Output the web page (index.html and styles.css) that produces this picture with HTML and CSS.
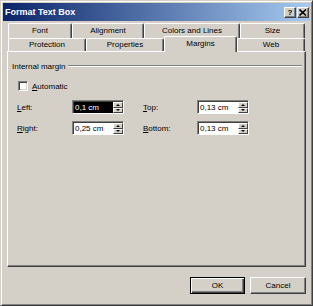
FILE: index.html
```html
<!DOCTYPE html>
<html lang="en">
<head>
    <meta charset="UTF-8">
    <meta name="viewport" content="width=device-width, initial-scale=1.0">
    <title>Format Text Box</title>
    <link rel="stylesheet" href="styles.css">
</head>
<body>
    <div class="window">
        <div class="titlebar">
            <span class="title">Format Text Box</span>
            <div class="title-buttons">
                <span class="tbtn help">?</span>
                <span class="tbtn close">
                    <svg width="8" height="7" viewBox="0 0 8 7"><path d="M0.5 0.5 L7 6.5 M7 0.5 L0.5 6.5" stroke="#000" stroke-width="1.6"/></svg>
                </span>
            </div>
        </div>

        <div class="tabs">
            <div class="tab-row back">
                <div class="tab t-font">Font</div>
                <div class="tab t-align">Alignment</div>
                <div class="tab t-colors">Colors and Lines</div>
                <div class="tab t-size">Size</div>
            </div>
            <div class="tab-row front">
                <div class="tab t-prot">Protection</div>
                <div class="tab t-props">Properties</div>
                <div class="tab t-margins selected">Margins</div>
                <div class="tab t-web">Web</div>
            </div>
        </div>

        <div class="panel">
            <div class="group-title">
                <span>Internal margin</span>
                <span class="rule"></span>
            </div>
            <div class="check">
                <span class="box"></span>
                <span><u>A</u>utomatic</span>
            </div>
            <div class="fields">
                <label><u>L</u>eft:</label>
                <div class="spin">
                    <span class="value selected-text">0,1 cm</span>
                    <span class="arrows"><span class="up"></span><span class="down"></span></span>
                </div>
                <label><u>T</u>op:</label>
                <div class="spin">
                    <span class="value">0,13 cm</span>
                    <span class="arrows"><span class="up"></span><span class="down"></span></span>
                </div>

                <label><u>R</u>ight:</label>
                <div class="spin">
                    <span class="value">0,25 cm</span>
                    <span class="arrows"><span class="up"></span><span class="down"></span></span>
                </div>
                <label><u>B</u>ottom:</label>
                <div class="spin">
                    <span class="value">0,13 cm</span>
                    <span class="arrows"><span class="up"></span><span class="down"></span></span>
                </div>
            </div>
        </div>

        <div class="buttons">
            <button class="btn default">OK</button>
            <button class="btn">Cancel</button>
        </div>
    </div>
</body>
</html>
```

FILE: styles.css
```css
body {
    margin: 0;
    background-color: #d4d0c8;
    font-family: "Liberation Sans", Arial, sans-serif;
    font-size: 8px;
    color: #000;
}

.window {
    width: 313px;
    height: 306px;
    box-sizing: border-box;
    border: 1px solid;
    border-color: #d4d0c8 #404040 #404040 #d4d0c8;
    box-shadow: inset 1px 1px #fff, inset -1px -1px #808080;
    padding: 2px;
    display: flex;
    flex-direction: column;
}

/* title bar */
.titlebar {
    height: 18px;
    background: linear-gradient(to right, #0a246a, #a6caf0);
    color: #fff;
    display: flex;
    align-items: center;
    justify-content: space-between;
    padding-left: 2px;
}

.title {
    font-size: 9px;
    font-weight: bold;
}

.title-buttons {
    display: flex;
    gap: 1px;
    margin-right: 1px;
}

.tbtn {
    width: 12px;
    height: 11px;
    box-sizing: border-box;
    background-color: #d4d0c8;
    border: 1px solid;
    border-color: #fff #404040 #404040 #fff;
    box-shadow: inset -1px -1px #808080;
    display: flex;
    align-items: center;
    justify-content: center;
    color: #000;
    font-weight: bold;
    font-size: 8px;
}

/* tabs */
.tabs {
    margin-top: 2px;
    padding-left: 5px;
}

.tab-row {
    display: flex;
}

.tab {
    box-sizing: border-box;
    background-color: #d4d0c8;
    border-top: 1px solid #fff;
    border-left: 1px solid #fff;
    border-right: 1px solid #404040;
    box-shadow: inset -1px 0 #808080;
    border-radius: 2px 2px 0 0;
    text-align: center;
}

.back .tab {
    height: 15px;
    line-height: 14px;
}

.front .tab {
    height: 13px;
    line-height: 12px;
}

.t-font { width: 64px; }
.t-align { width: 72px; }
.t-colors { width: 96px; }
.t-size { width: 65px; }
.t-prot { width: 78px; }
.t-props { width: 78px; }
.t-margins { width: 73px; }
.t-web { width: 68px; }

.front .tab.selected {
    position: relative;
    z-index: 1;
    height: 16px;
    margin-top: -2px;
    line-height: 13px;
}

/* panel */
.panel {
    flex: 1;
    margin: 0 4px;
    margin-top: -1px;
    border: 1px solid;
    border-color: #fff #404040 #404040 #fff;
    box-shadow: inset -1px -1px #808080;
    padding: 0 4px;
}

.group-title {
    display: flex;
    align-items: center;
    margin-top: 9px;
    height: 10px;
}

.rule {
    flex: 1;
    margin-left: 3px;
    margin-right: -1px;
    border-top: 1px solid #808080;
    border-bottom: 1px solid #fff;
}

.check {
    display: flex;
    align-items: center;
    gap: 4px;
    margin-top: 10px;
    margin-left: 6px;
}

.box {
    width: 10px;
    height: 10px;
    box-sizing: border-box;
    background-color: #fff;
    border: 1px solid;
    border-color: #808080 #fff #fff #808080;
    box-shadow: inset 1px 1px #404040, inset -1px -1px #d4d0c8;
}

.fields {
    display: grid;
    grid-template-columns: 55px 71px 54px 52px;
    grid-auto-rows: 14px;
    row-gap: 7px;
    align-items: center;
    margin-top: 9px;
    margin-left: 5px;
}

.spin {
    width: 52px;
    height: 14px;
    box-sizing: border-box;
    border: 1px solid;
    border-color: #808080 #fff #fff #808080;
    box-shadow: inset 1px 1px #404040;
    background-color: #fff;
    display: flex;
    padding: 1px 0 0 1px;
}

.value {
    flex: 1;
    line-height: 11px;
    padding-left: 1px;
    white-space: nowrap;
}

.selected-text {
    background-color: #000;
    color: #fff;
}

.arrows {
    width: 10px;
    display: flex;
    flex-direction: column;
}

.arrows span {
    flex: 1;
    box-sizing: border-box;
    background-color: #d4d0c8;
    border-top: 1px solid #fff;
    border-left: 1px solid #fff;
    border-right: 1px solid #404040;
    border-bottom: 1px solid #404040;
    display: flex;
    align-items: center;
    justify-content: center;
}

.arrows .up::after {
    content: "";
    border-left: 2px solid transparent;
    border-right: 2px solid transparent;
    border-bottom: 2px solid #000;
}

.arrows .down::after {
    content: "";
    border-left: 2px solid transparent;
    border-right: 2px solid transparent;
    border-top: 2px solid #000;
}

/* bottom buttons */
.buttons {
    height: 36px;
    display: flex;
    justify-content: flex-end;
    align-items: flex-start;
    gap: 5px;
    padding: 10px 4px 0 0;
    box-sizing: border-box;
}

.btn {
    width: 56px;
    height: 17px;
    box-sizing: border-box;
    background-color: #d4d0c8;
    border: 1px solid;
    border-color: #fff #404040 #404040 #fff;
    box-shadow: inset -1px -1px #808080;
    font-family: inherit;
    font-size: 8px;
    padding: 0;
    color: #000;
}

.btn.default {
    width: 55px;
    border-color: #000;
    box-shadow: inset 1px 1px #fff, inset -1px -1px #404040, inset -2px -2px #808080;
}
```
